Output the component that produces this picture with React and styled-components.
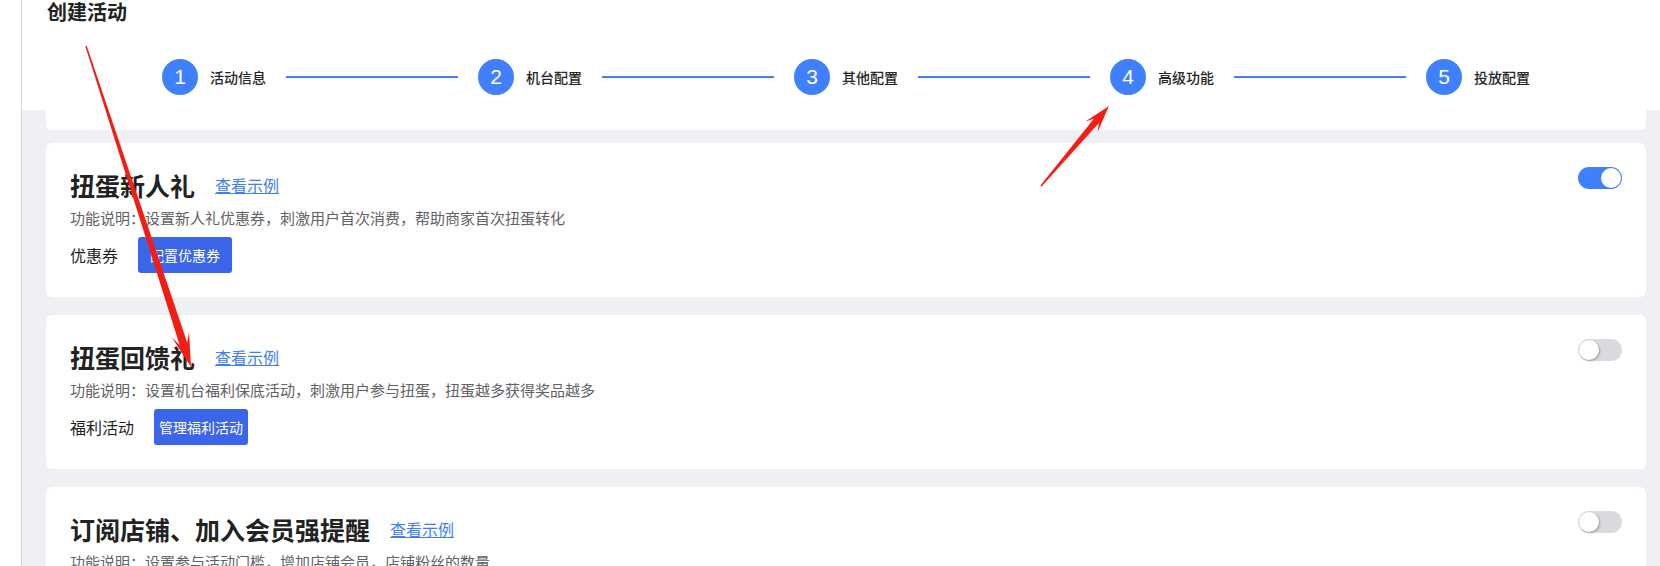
import React from "react";
import styled, { createGlobalStyle } from "styled-components";

const GlobalStyle = createGlobalStyle`
  html, body {
    margin: 0;
    padding: 0;
    height: 566px;
    overflow: hidden;
    background: #ffffff;
  }
  body {
    font-family: "Noto Sans CJK SC", "Noto Sans", sans-serif;
    color: #222;
  }
  * { box-sizing: border-box; }
`;

const Page = styled.div`
  position: relative;
  display: flex;
  width: 1660px;
  height: 566px;
  overflow: hidden;
`;

const SideStrip = styled.div`
  width: 22px;
  flex: none;
  background: #fff;
  border-right: 1px solid #d6d7da;
`;

const Main = styled.div`
  flex: 1;
  min-width: 0;
  padding: 0 14px 0 24px;
  background: linear-gradient(#ffffff 0 110px, #eff0f4 110px 100%);
`;

const HeaderCard = styled.div`
  background: #fff;
  border-radius: 0 0 6px 6px;
  height: 130px;
  padding: 0 0 0 1px;
`;

const PageTitle = styled.h1`
  margin: 0;
  font-size: 20px;
  line-height: 24px;
  font-weight: 700;
  color: #222;
`;

const Steps = styled.div`
  display: flex;
  align-items: center;
  margin-top: 35px;
  padding-left: 115px;
  height: 36px;
`;

const Step = styled.div`
  display: flex;
  align-items: center;
  gap: 12px;
`;

const StepCircle = styled.div`
  width: 36px;
  height: 36px;
  border-radius: 50%;
  background: #4080ff;
  color: #fff;
  display: flex;
  align-items: center;
  justify-content: center;
  font-family: "Liberation Sans", Arial, sans-serif;
  font-size: 21px;
  font-weight: 400;
`;

const StepLabel = styled.span`
  font-size: 14px;
  font-weight: 500;
  color: #262626;
  white-space: nowrap;
`;

const StepLine = styled.div`
  width: 172px;
  height: 2px;
  margin: 0 20px;
  background: #4080ff;
`;

const CardList = styled.div`
  display: flex;
  flex-direction: column;
  gap: 18px;
  margin-top: 13px;
`;

const Card = styled.section`
  background: #fff;
  border-radius: 6px;
  padding: 24px;
  display: flex;
  align-items: flex-start;
  justify-content: space-between;
  height: 154px;
  flex: none;
`;

const CardBody = styled.div`
  display: flex;
  flex-direction: column;
`;

const TitleRow = styled.div`
  display: flex;
  align-items: center;
  gap: 20px;
  height: 36px;
`;

const CardTitle = styled.h2`
  margin: 0;
  font-size: 25px;
  line-height: 36px;
  font-weight: 700;
  color: #222;
  white-space: nowrap;
`;

const ExampleLink = styled.a`
  font-size: 16px;
  line-height: 22px;
  color: #3e7ef8;
  text-decoration: underline;
  cursor: pointer;
  white-space: nowrap;
`;

const Desc = styled.p`
  margin: 4px 0 0;
  font-size: 15px;
  line-height: 22px;
  color: #606266;
  white-space: nowrap;
`;

const ActionRow = styled.div`
  display: flex;
  align-items: center;
  gap: 20px;
  margin-top: 8px;
`;

const ActionLabel = styled.span`
  font-size: 16px;
  color: #1f1f1f;
`;

const PrimaryButton = styled.button`
  width: 94px;
  height: 36px;
  border: none;
  border-radius: 3px;
  background: #3b66e9;
  color: #fff;
  font-family: inherit;
  font-size: 14px;
  padding: 0;
  cursor: pointer;
`;

const Toggle = styled.div`
  width: 44px;
  height: 22px;
  border-radius: 11px;
  flex: none;
  background: ${(p) => (p.$on ? "#4080ff" : "#d8dade")};
  display: flex;
  align-items: center;
  justify-content: ${(p) => (p.$on ? "flex-end" : "flex-start")};
  padding: 1px;
`;

const Knob = styled.div`
  width: 20px;
  height: 20px;
  border-radius: 50%;
  background: #fff;
  box-shadow: ${(p) => (p.$on ? "none" : "1px 1px 2px rgba(0,0,0,0.3)")};
`;

const Overlay = styled.svg`
  position: absolute;
  left: 0;
  top: 0;
  width: 1660px;
  height: 566px;
  pointer-events: none;
`;

const steps = ["活动信息", "机台配置", "其他配置", "高级功能", "投放配置"];

const cards = [
  {
    title: "扭蛋新人礼",
    desc: "功能说明：设置新人礼优惠券，刺激用户首次消费，帮助商家首次扭蛋转化",
    label: "优惠券",
    button: "配置优惠券",
    on: true,
  },
  {
    title: "扭蛋回馈礼",
    desc: "功能说明：设置机台福利保底活动，刺激用户参与扭蛋，扭蛋越多获得奖品越多",
    label: "福利活动",
    button: "管理福利活动",
    on: false,
  },
  {
    title: "订阅店铺、加入会员强提醒",
    desc: "功能说明：设置参与活动门槛，增加店铺会员，店铺粉丝的数量",
    label: "",
    button: "",
    on: false,
  },
];

function arrowPoints(x1, y1, x2, y2, headLen, headW, tailW, neckW) {
  const dx = x2 - x1;
  const dy = y2 - y1;
  const L = Math.hypot(dx, dy);
  const ux = dx / L;
  const uy = dy / L;
  const px = -uy;
  const py = ux;
  const bx = x2 - ux * headLen;
  const by = y2 - uy * headLen;
  const nx = x2 - ux * (headLen * 0.72);
  const ny = y2 - uy * (headLen * 0.72);
  const pts = [
    [x1 + (px * tailW) / 2, y1 + (py * tailW) / 2],
    [nx + (px * neckW) / 2, ny + (py * neckW) / 2],
    [bx + (px * headW) / 2, by + (py * headW) / 2],
    [x2, y2],
    [bx - (px * headW) / 2, by - (py * headW) / 2],
    [nx - (px * neckW) / 2, ny - (py * neckW) / 2],
    [x1 - (px * tailW) / 2, y1 - (py * tailW) / 2],
  ];
  return pts.map((p) => p.map((v) => v.toFixed(1)).join(",")).join(" ");
}

export default function App() {
  return (
    <>
      <GlobalStyle />
      <Page>
        <SideStrip />
        <Main>
          <HeaderCard>
            <PageTitle>创建活动</PageTitle>
            <Steps>
              {steps.map((s, i) => (
                <React.Fragment key={s}>
                  <Step>
                    <StepCircle>{i + 1}</StepCircle>
                    <StepLabel>{s}</StepLabel>
                  </Step>
                  {i < steps.length - 1 && <StepLine />}
                </React.Fragment>
              ))}
            </Steps>
          </HeaderCard>
          <CardList>
            {cards.map((c) => (
              <Card key={c.title}>
                <CardBody>
                  <TitleRow>
                    <CardTitle>{c.title}</CardTitle>
                    <ExampleLink>查看示例</ExampleLink>
                  </TitleRow>
                  <Desc>{c.desc}</Desc>
                  {c.button && (
                    <ActionRow>
                      <ActionLabel>{c.label}</ActionLabel>
                      <PrimaryButton>{c.button}</PrimaryButton>
                    </ActionRow>
                  )}
                </CardBody>
                <Toggle $on={c.on}>
                  <Knob $on={c.on} />
                </Toggle>
              </Card>
            ))}
          </CardList>
        </Main>
        <Overlay viewBox="0 0 1660 566">
          <polygon
            points={arrowPoints(86, 46, 191, 367, 34, 18, 1.5, 8)}
            fill="#f41d14"
          />
          <polygon
            points={arrowPoints(1041, 186, 1109, 106, 27, 16, 1.5, 6.5)}
            fill="#f41d14"
          />
        </Overlay>
      </Page>
    </>
  );
}
